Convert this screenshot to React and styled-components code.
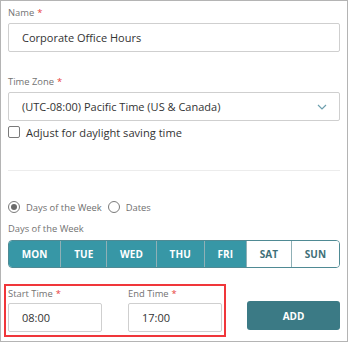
import React from "react";
import styled, { createGlobalStyle } from "styled-components";

const Global = createGlobalStyle`
  html, body { margin: 0; padding: 0; background: #fff; }
  body { font-family: "Open Sans", "Liberation Sans", sans-serif; }
  * { box-sizing: border-box; }
`;

const Panel = styled.div`
  width: 348px;
  height: 342px;
  border: 1px solid #b4b4b4;
  padding: 5px 7px 0 7px;
  display: flex;
  flex-direction: column;
`;

const Label = styled.div`
  font-size: 9.4px;
  line-height: 14px;
  color: #737373;
  margin-top: ${(p) => p.$mt || 0}px;
  margin-bottom: ${(p) => p.$mb || 0}px;
`;

const Req = styled.span`
  color: #e8403a;
  margin-left: 3px;
`;

const TextInput = styled.div`
  height: 29px;
  border: 1px solid #cfcfcf;
  border-radius: 2px;
  padding: 0 13px;
  display: flex;
  align-items: center;
  font-size: 11px;
  color: #333;
`;

const Select = styled(TextInput)`
  justify-content: space-between;
  padding-right: 12px;
`;

const CheckRow = styled.label`
  display: flex;
  align-items: center;
  gap: 6px;
  margin-top: 4px;
  height: 14px;
  font-size: 11.1px;
  color: #333;
`;

const Box = styled.span`
  width: 12px;
  height: 12px;
  border: 1px solid #7a7a7a;
  border-radius: 2px;
  background: #fff;
`;

const Divider = styled.div`
  height: 1px;
  background: #ececec;
  margin-top: 31px;
`;

const RadioRow = styled.div`
  display: flex;
  align-items: center;
  margin-top: 29px;
  height: 14px;
  font-size: 9.4px;
  color: #6f6f6f;
`;

const Radio = styled.span`
  width: 12px;
  height: 12px;
  border-radius: 50%;
  border: 1px solid #7a7a7a;
  display: flex;
  align-items: center;
  justify-content: center;
  margin-right: 6px;
  margin-left: ${(p) => p.$ml || 0}px;
  &::after {
    content: "";
    width: 6px;
    height: 6px;
    border-radius: 50%;
    background: ${(p) => (p.$on ? "#6b6b6b" : "transparent")};
  }
`;

const DayGroup = styled.div`
  display: flex;
  height: 28px;
  border: 1px solid #4f8a94;
  border-radius: 4px;
  overflow: hidden;
  margin-top: 4px;
`;

const Day = styled.div`
  flex: 1 1 auto;
  display: flex;
  align-items: center;
  justify-content: center;
  padding: 0 12px;
  font-size: 10px;
  font-weight: 700;
  letter-spacing: 0.1px;
  color: ${(p) => (p.$on ? "#fff" : "#3f6f78")};
  background: ${(p) => (p.$on ? "#3797a6" : "#fff")};
  & + & {
    border-left: 1px solid ${(p) => (p.$on ? "#2c7f8b" : "#8fb0b6")};
  }
`;

const Bottom = styled.div`
  display: flex;
  align-items: flex-start;
  justify-content: space-between;
  margin-top: 16px;
`;

const Highlight = styled.div`
  display: flex;
  gap: 26px;
  margin-left: -4px;
  border: 2px solid #f0363a;
  padding: 1px 2px 3px 2px;
  width: 222px;
`;

const Field = styled.div`
  display: flex;
  flex-direction: column;
`;

const TimeInput = styled(TextInput)`
  width: 94px;
  margin-top: 2px;
`;

const AddButton = styled.button`
  width: 93px;
  height: 29px;
  margin-top: 17px;
  border: none;
  border-radius: 3px;
  background: #3b7a85;
  color: #fff;
  font-family: "Open Sans", "Liberation Sans", sans-serif;
  font-size: 10px;
  font-weight: 700;
`;

const days = [
  ["MON", true],
  ["TUE", true],
  ["WED", true],
  ["THU", true],
  ["FRI", true],
  ["SAT", false],
  ["SUN", false],
];

export default function App() {
  return (
    <>
      <Global />
      <Panel>
        <Label $mb={3}>
          Name<Req>*</Req>
        </Label>
        <TextInput>Corporate Office Hours</TextInput>
        <Label $mt={23} $mb={3}>
          Time Zone<Req>*</Req>
        </Label>
        <Select>
          <span>(UTC-08:00) Pacific Time (US &amp; Canada)</span>
          <svg width="10" height="6" viewBox="0 0 10 6">
            <path d="M1 1l4 4 4-4" fill="none" stroke="#6d9fae" strokeWidth="1.2" />
          </svg>
        </Select>
        <CheckRow>
          <Box />
          Adjust for daylight saving time
        </CheckRow>
        <Divider />
        <RadioRow>
          <Radio $on />
          Days of the Week
          <Radio $ml={6} />
          Dates
        </RadioRow>
        <Label $mt={8}>Days of the Week</Label>
        <DayGroup>
          {days.map(([d, on]) => (
            <Day key={d} $on={on}>
              {d}
            </Day>
          ))}
        </DayGroup>
        <Bottom>
          <Highlight>
            <Field>
              <Label>
                Start Time<Req>*</Req>
              </Label>
              <TimeInput>08:00</TimeInput>
            </Field>
            <Field>
              <Label>
                End Time<Req>*</Req>
              </Label>
              <TimeInput>17:00</TimeInput>
            </Field>
          </Highlight>
          <AddButton>ADD</AddButton>
        </Bottom>
      </Panel>
    </>
  );
}
